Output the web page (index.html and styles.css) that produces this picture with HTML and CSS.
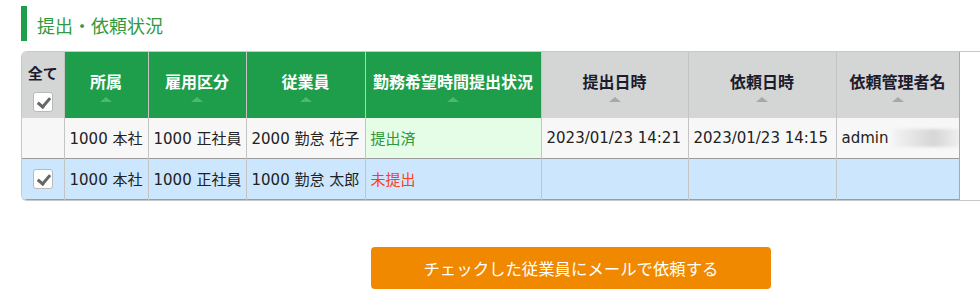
FILE: index.html
```html
<!DOCTYPE html>
<html lang="ja">
<head>
<meta charset="utf-8">
<title>提出・依頼状況</title>
<link rel="stylesheet" href="styles.css">
</head>
<body>
<h2 class="heading">提出・依頼状況</h2>
<div class="table-wrap">
  <table class="status-table">
    <colgroup>
      <col class="c-all"><col class="c-dept"><col class="c-type"><col class="c-emp"><col class="c-status"><col class="c-sub"><col class="c-req"><col class="c-admin">
    </colgroup>
    <thead>
      <tr>
        <th class="th-gray th-all"><div class="all-label">全て</div><span class="cb checked"></span></th>
        <th class="th-green">所属<span class="sort"></span></th>
        <th class="th-green">雇用区分<span class="sort"></span></th>
        <th class="th-green">従業員<span class="sort"></span></th>
        <th class="th-green">勤務希望時間提出状況<span class="sort"></span></th>
        <th class="th-gray">提出日時<span class="sort"></span></th>
        <th class="th-gray">依頼日時<span class="sort"></span></th>
        <th class="th-gray">依頼管理者名<span class="sort"></span></th>
      </tr>
    </thead>
    <tbody>
      <tr class="row-done">
        <td class="td-check"></td>
        <td>1000 本社</td>
        <td>1000 正社員</td>
        <td>2000 勤怠 花子</td>
        <td class="st-done">提出済</td>
        <td>2023/01/23 14:21</td>
        <td>2023/01/23 14:15</td>
        <td>admin <span class="blur"></span></td>
      </tr>
      <tr class="row-sel">
        <td class="td-check"><span class="cb checked"></span></td>
        <td>1000 本社</td>
        <td>1000 正社員</td>
        <td>1000 勤怠 太郎</td>
        <td class="st-none">未提出</td>
        <td></td>
        <td></td>
        <td></td>
      </tr>
    </tbody>
  </table>
</div>
<div class="actions">
  <button class="btn-mail" type="button">チェックした従業員にメールで依頼する</button>
</div>
</body>
</html>
```

FILE: styles.css
```css
html, body {
  margin: 0;
  padding: 0;
  background: #fff;
  overflow: hidden;
}
body {
  font-family: "DejaVu Sans", "Noto Sans CJK JP", sans-serif;
  color: #222;
  padding: 6px 0 0 21px;
}
.heading {
  margin: 0;
  height: 35px;
  box-sizing: border-box;
  border-left: 6px solid #1e9e4a;
  padding: 3px 0 0 10px;
  font-family: "Noto Sans CJK JP", sans-serif;
  font-weight: normal;
  font-size: 18px;
  line-height: 32px;
  color: #2f9a3e;
}
.table-wrap {
  margin-top: 10px;
  width: 990px;
  border: 1px solid #c9c9c9;
  border-right: none;
  border-radius: 6px 0 0 6px;
  overflow: hidden;
}
.status-table {
  border-collapse: collapse;
  table-layout: fixed;
  width: 937px;
  font-size: 15px;
}
.c-all { width: 42px; }
.c-dept { width: 84px; }
.c-type { width: 98px; }
.c-emp { width: 119px; }
.c-status { width: 176px; }
.c-sub { width: 147px; }
.c-req { width: 148px; }
.c-admin { width: 123px; }

th, td {
  border-left: 1px solid #c4c4c4;
  padding: 0;
  white-space: nowrap;
  overflow: hidden;
}
th:first-child, td:first-child { border-left: none; }
th:last-child, td:last-child { border-right: 1px solid #a9a9a9; }

thead tr { height: 66px; }
th {
  font-family: "Noto Sans CJK JP", sans-serif;
  font-weight: bold;
  font-size: 16px;
  line-height: 20px;
  text-align: center;
  vertical-align: middle;
  padding-top: 2px;
}
.th-green { background: #1e9e4a; color: #fff; }
.th-gray { background: #d4d5d5; color: #1c1c2e; }
.sort {
  display: block;
  width: 0;
  height: 0;
  margin: 6px auto 0;
  border-left: 6px solid transparent;
  border-right: 6px solid transparent;
  border-bottom: 5px solid #4fb772;
}
.th-gray .sort { border-bottom-color: #a8a8ac; }
.th-all {
  vertical-align: top;
  padding-top: 12px;
}
.all-label { font-size: 15px; line-height: 18px; margin-bottom: 7px; }

.cb {
  display: inline-block;
  box-sizing: border-box;
  width: 20px;
  height: 20px;
  border: 1px solid #b9b9b9;
  border-radius: 3px;
  background: #fff;
  position: relative;
  vertical-align: middle;
}
.cb.checked::after {
  content: "";
  position: absolute;
  left: 6px;
  top: 2px;
  width: 5px;
  height: 10px;
  border-right: 3px solid #666;
  border-bottom: 3px solid #666;
  transform: rotate(40deg);
}

tbody td {
  padding: 0 5px;
  vertical-align: middle;
  font-size: 15px;
}
.row-done { height: 40px; background: #f7f7f7; border-bottom: 1px solid #9c9c9c; }
.row-sel { height: 41px; background: #cce7fd; border-bottom: 1px solid #9c9c9c; }
.td-check { text-align: center; padding: 0; }
.st-done { background: #e5fde7; color: #2a9a3a; font-family: "Noto Sans CJK JP", sans-serif; }
.st-none { color: #ff3b1f; font-family: "Noto Sans CJK JP", sans-serif; }
.blur {
  display: inline-block;
  width: 68px;
  height: 18px;
  vertical-align: middle;
  background: linear-gradient(90deg, #f3f3f3 0%, #e2e2e2 35%, #d6d6d6 60%, #e6e6e6 85%, #f1f1f1 100%);
  border-radius: 3px;
  filter: blur(1.5px);
}

.actions {
  padding: 46px 0 0 350px;
}
.btn-mail {
  width: 400px;
  height: 42px;
  border: none;
  border-radius: 4px;
  background: #f08800;
  color: #fff;
  font-family: "Noto Sans CJK JP", sans-serif;
  font-size: 16.4px;
  padding: 0;
  cursor: pointer;
}
```
